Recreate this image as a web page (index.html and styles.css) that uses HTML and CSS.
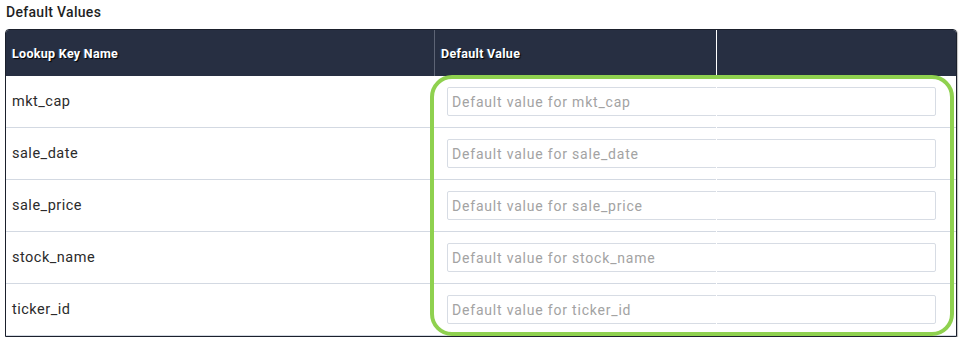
FILE: index.html
```html
<!DOCTYPE html>
<html lang="en">
<head>
    <meta charset="UTF-8">
    <meta name="viewport" content="width=device-width, initial-scale=1.0">
    <title>Default Values</title>
    <link rel="stylesheet" href="styles.css">
</head>
<body>
    <div class="section">
        <h2 class="section-title">Default Values</h2>

        <div class="lookup-table">
            <div class="table-head">
                <div class="th">Lookup Key Name</div>
                <div class="th th-value">Default Value</div>
                <div class="th th-extra"></div>
            </div>

            <div class="table-row">
                <div class="td key">mkt_cap</div>
                <div class="td value"><input type="text" placeholder="Default value for mkt_cap"></div>
            </div>
            <div class="table-row">
                <div class="td key">sale_date</div>
                <div class="td value"><input type="text" placeholder="Default value for sale_date"></div>
            </div>
            <div class="table-row">
                <div class="td key">sale_price</div>
                <div class="td value"><input type="text" placeholder="Default value for sale_price"></div>
            </div>
            <div class="table-row">
                <div class="td key">stock_name</div>
                <div class="td value"><input type="text" placeholder="Default value for stock_name"></div>
            </div>
            <div class="table-row">
                <div class="td key">ticker_id</div>
                <div class="td value"><input type="text" placeholder="Default value for ticker_id"></div>
            </div>

            <!-- column rule that runs over the rows -->
            <div class="col-rule"></div>
            <!-- highlight annotation -->
            <div class="highlight"></div>
        </div>
    </div>
</body>
</html>
```

FILE: styles.css
```css
body {
    margin: 0;
    background-color: #fff;
    font-family: Roboto, "Liberation Sans", sans-serif;
    color: #333;
}
.section {
    padding: 4px 6px 0 5px;
}
.section-title {
    margin: 0 0 9px 1px;
    font-size: 14px;
    font-weight: 500;
    letter-spacing: 0.3px;
    line-height: 16px;
    color: #1f1f1f;
}
.lookup-table {
    position: relative;
    width: 950px;
    border: 1px solid #1b202c;
    border-radius: 4px 4px 0 0;
    box-shadow: 1px 1px 1px rgba(0, 0, 0, 0.25);
}
.table-head {
    display: grid;
    grid-template-columns: 428px 282px 1fr;
    height: 46px;
    background-color: #272f42;
    border-radius: 3px 3px 0 0;
}
.th {
    display: flex;
    align-items: center;
    padding-left: 6px;
    font-size: 12.5px;
    font-weight: 700;
    letter-spacing: 0.3px;
    color: #fff;
    text-shadow: 1px 1px 1px #000, -1px 0 1px rgba(60, 120, 220, 0.6);
}
.th-value {
    border-left: 1px solid #5d6475;
    padding-left: 6px;
}
.th-extra {
    padding-left: 0;
}
.table-row {
    display: grid;
    grid-template-columns: 428px 1fr;
    height: 51px;
    border-bottom: 1px solid #d3d9e2;
}
.table-row:last-of-type {
    border-bottom: none;
    height: 52px;
}
.td {
    display: flex;
    align-items: center;
}
.key {
    padding-left: 6px;
    font-size: 14.5px;
    letter-spacing: 0.5px;
    color: #2b2b2b;
}
.value {
    padding: 0 20px 0 12px;
    border-left: 1px solid transparent;
}
.value input {
    width: 100%;
    height: 29px;
    box-sizing: border-box;
    padding: 0 4px;
    border: 1px solid #d7dce4;
    border-radius: 2px;
    font-family: Roboto, "Liberation Sans", sans-serif;
    font-size: 14px;
    letter-spacing: 0.8px;
    color: #333;
}
.value input::placeholder {
    color: #a3a3a3;
}
.col-rule {
    position: absolute;
    top: 0;
    bottom: 0;
    left: 710px;
    width: 1px;
    background-color: #fff;
}
.highlight {
    position: absolute;
    left: 424px;
    top: 45px;
    right: 2px;
    bottom: 0;
    border: 4px solid #8fd14f;
    border-radius: 22px;
}
```
